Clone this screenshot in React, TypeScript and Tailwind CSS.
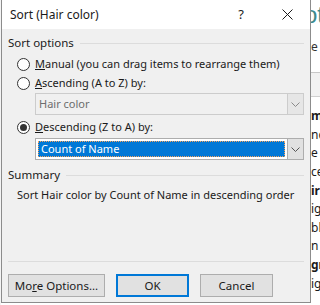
const ui = { fontFamily: '"Noto Sans", "Liberation Sans", Arial, sans-serif' };

function Radio({ checked }: { checked?: boolean }) {
  return (
    <span className="w-[13px] h-[13px] rounded-full border border-[#333333] bg-white flex items-center justify-center shrink-0">
      {checked && <span className="w-[7px] h-[7px] rounded-full bg-[#333333]" />}
    </span>
  );
}

function Chevron({ color }: { color: string }) {
  return (
    <svg width="9" height="5" viewBox="0 0 9 5" fill="none">
      <path d="M0.5 0.5 L4.5 4.5 L8.5 0.5" stroke={color} strokeWidth="1" />
    </svg>
  );
}

function GroupHeader({ label }: { label: string }) {
  return (
    <div className="h-[16px] flex items-center gap-[6px] text-[11.5px] text-[#1a1a1a]">
      <span>{label}</span>
      <span className="flex-1 h-px bg-[#dcdcdc]" />
    </div>
  );
}

function Button({ children, primary, w }: { children: React.ReactNode; primary?: boolean; w: string }) {
  return (
    <div
      className={`${w} h-[23px] flex items-center justify-center text-[11.5px] text-[#1a1a1a] bg-[#e1e1e1] ${
        primary ? "border-2 border-[#0078d7]" : "border border-[#adadad]"
      }`}
    >
      {children}
    </div>
  );
}

// bits of the worksheet behind the dialog
const sheetRows = [
  { t: "m", b: true },
  { t: "nc" },
  { t: "e c" },
  { t: "ce" },
  { t: "ir", b: true },
  { t: "ig" },
  { t: "bli" },
  { t: "n -" },
  { t: "gn", b: true },
  { t: "ig" },
];

export default function App() {
  return (
    <div className="w-[320px] h-[305px] overflow-hidden bg-white flex" style={ui}>
      <div className="w-px bg-[#f4f4f4]" />
      <div className="w-[310px] shrink-0 flex flex-col">
        <div className="h-[303px] flex flex-col border-l border-r border-b border-[#8c8c8c]">
          {/* title bar */}
          <div className="h-[29px] bg-white flex items-center text-[12px] text-[#1a1a1a] whitespace-nowrap">
            <span className="pl-[8px]">Sort (Hair color)</span>
            <span className="ml-auto w-[12px] text-center text-[13px]">?</span>
            <span className="ml-[34px] mr-[17px] w-[12px] flex items-center justify-center">
              <svg width="11" height="11" viewBox="0 0 11 11">
                <path d="M0.5 0.5 L10.5 10.5 M10.5 0.5 L0.5 10.5" stroke="#1a1a1a" strokeWidth="1" />
              </svg>
            </span>
          </div>

          {/* body */}
          <div className="flex-1 bg-[#f0f0f0] pl-[6px] pr-[6px] pt-[6px] flex flex-col whitespace-nowrap">
            <GroupHeader label="Sort options" />

            <div className="pl-[9px] mt-[4px] h-[19px] flex items-center gap-[5px] text-[11px] text-[#1a1a1a]">
              <Radio />
              <span>
                <span className="underline">M</span>anual (you can drag items to rearrange them)
              </span>
            </div>
            <div className="pl-[9px] h-[19px] flex items-center gap-[5px] text-[11px] text-[#1a1a1a]">
              <Radio />
              <span>
                <span className="underline">A</span>scending (A to Z) by:
              </span>
            </div>
            <div className="ml-[27px] h-[22px] flex border border-[#cccccc] bg-[#f0f0f0]">
              <div className="flex-1 flex items-center pl-[3px] text-[11px] text-[#6d6d6d]">Hair color</div>
              <div className="w-[16px] flex items-center justify-center bg-[#e6e6e6] border-l border-[#cccccc]">
                <Chevron color="#8a8a8a" />
              </div>
            </div>

            <div className="pl-[9px] mt-[3px] h-[19px] flex items-center gap-[5px] text-[11px] text-[#1a1a1a]">
              <Radio checked />
              <span>
                <span className="underline">D</span>escending (Z to A) by:
              </span>
            </div>
            <div className="ml-[27px] mt-px h-[22px] flex border border-[#adadad] bg-white">
              <div className="flex-1 p-[2px] flex">
                <div className="flex-1 flex items-center pl-[2px] text-[11px] text-white bg-[#0078d7] border border-dotted border-[#f5a35c]">
                  Count of Name
                </div>
              </div>
              <div className="w-[16px] flex items-center justify-center bg-[#e1e1e1] border-l border-[#adadad]">
                <Chevron color="#555555" />
              </div>
            </div>

            <div className="mt-[7px]">
              <GroupHeader label="Summary" />
            </div>
            <div className="mt-[4px] pl-[9px] h-[16px] flex items-center text-[11px] text-[#1a1a1a]">
              Sort Hair color by Count of Name in descending order
            </div>

            <div className="mt-[58px] h-px bg-[#dcdcdc]" />

            <div className="mt-[12px] flex gap-[11px]">
              <Button w="w-[97px]">
                <span>
                  Mo<span className="underline">r</span>e Options...
                </span>
              </Button>
              <Button w="w-[73px]" primary>
                OK
              </Button>
              <Button w="w-[73px]">Cancel</Button>
            </div>
          </div>
        </div>
      </div>

      {/* worksheet peeking out on the right */}
      <div className="flex-1 flex flex-col overflow-hidden whitespace-nowrap">
        <div className="h-[30px] -ml-[7px] text-[24px] leading-[30px] text-[#3e8a8c]" style={{ fontFamily: '"Liberation Sans", Arial, sans-serif' }}>
          ot
        </div>
        <div className="h-[43px] pt-[8px] text-[12px] text-[#333333] border-b border-[#c8c8c8]">
          e <span className="text-[#7a1f1f]">f</span>
        </div>
        <div className="h-[24px] bg-[#f2f2f2] border-b border-[#d0d0d0]" />
        <div className="h-[10px]" />
        {sheetRows.map((r, i) => (
          <div key={i} className={`h-[18.6px] flex items-center text-[12px] text-[#1a1a1a] ${r.b ? "font-bold" : ""}`}>
            {r.t}
          </div>
        ))}
      </div>
    </div>
  );
}
